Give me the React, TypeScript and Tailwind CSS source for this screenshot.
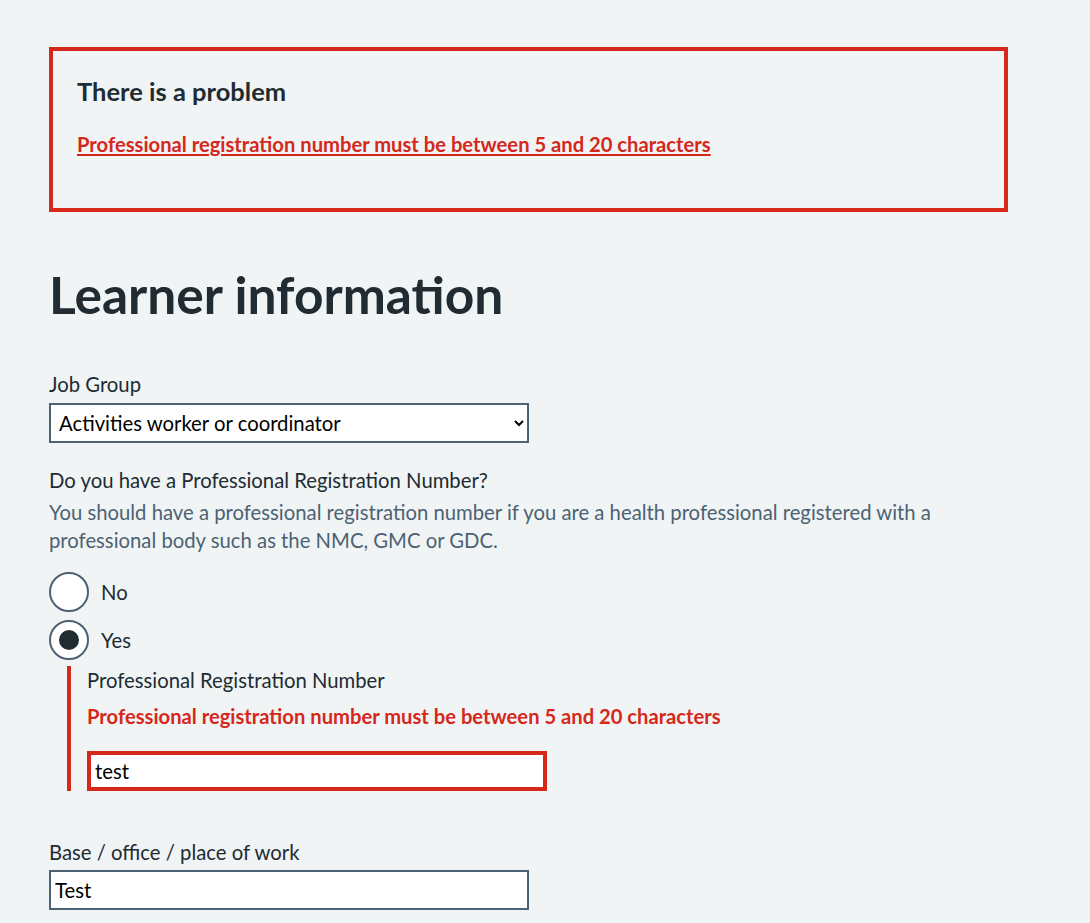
import { useState } from "react";

const font = { fontFamily: "Lato, 'Noto Sans', sans-serif" };

function Radio({ label, checked, onChange }: { label: string; checked: boolean; onChange: () => void }) {
  return (
    <label className="flex cursor-pointer items-center gap-3" onClick={onChange}>
      <span className="flex h-10 w-10 shrink-0 items-center justify-center rounded-full border-2 border-[#4c6272] bg-white">
        {checked && <span className="h-5 w-5 rounded-full bg-[#212b32]" />}
      </span>
      <span className="text-[20.3px] leading-7 text-[#212b32]">{label}</span>
    </label>
  );
}

export default function App() {
  const [hasNumber, setHasNumber] = useState(true);
  const [regNumber, setRegNumber] = useState("test");
  const [base, setBase] = useState("Test");

  return (
    <div className="min-h-[923px] bg-[#f0f4f5] pl-[49px] pr-[82px] pt-[47px] pb-10 text-[#212b32]" style={font}>
      {/* Error summary */}
      <div className="mb-[54px] border-4 border-[#d5281b] px-6 pt-6 pb-[50px]">
        <h2 className="mb-[23px] text-[25.5px] font-bold leading-8">There is a problem</h2>
        <ul>
          <li>
            <a href="#reg" className="text-[20.2px] font-bold leading-7 text-[#d5281b] underline">
              Professional registration number must be between 5 and 20 characters
            </a>
          </li>
        </ul>
      </div>

      <h1 className="mb-12 text-[51.5px] font-bold leading-[56px]">Learner information</h1>

      {/* Job group */}
      <div className="mb-[23px]">
        <label className="mb-[5px] block text-[20.3px] leading-7">Job Group</label>
        <select
          defaultValue="activities"
          className="block h-10 w-[480px] border-2 border-[#4c6272] bg-white pl-1 pr-2 text-[20.3px] text-black outline-none"
          style={font}
        >
          <option value="activities">Activities worker or coordinator</option>
          <option value="admin">Administrative or office staff</option>
        </select>
      </div>

      {/* Registration number */}
      <div>
        <div className="text-[20.3px] leading-7">Do you have a Professional Registration Number?</div>
        <div className="mb-[18px] mt-1 max-w-[920px] text-[20.3px] leading-7 text-[#4c6272]">
          You should have a professional registration number if you are a health professional registered with a
          professional body such as the NMC, GMC or GDC.
        </div>
        <div className="flex flex-col gap-2">
          <Radio label="No" checked={!hasNumber} onChange={() => setHasNumber(false)} />
          <Radio label="Yes" checked={hasNumber} onChange={() => setHasNumber(true)} />
        </div>
        {hasNumber && (
          <div className="ml-[18px] mt-[6px] border-l-4 border-[#d5281b] pl-4">
            <label htmlFor="reg" className="mb-2 block text-[20.3px] leading-7">
              Professional Registration Number
            </label>
            <div className="mb-[21px] text-[20.2px] font-bold leading-7 text-[#d5281b]">
              Professional registration number must be between 5 and 20 characters
            </div>
            <input
              id="reg"
              value={regNumber}
              onChange={(e) => setRegNumber(e.target.value)}
              className="block h-10 w-[460px] border-4 border-[#d5281b] bg-white px-1 text-[20.3px] text-black outline-none"
              style={font}
            />
          </div>
        )}
      </div>

      {/* Base */}
      <div className="mt-[47px]">
        <label className="mb-1 block text-[20.3px] leading-7">Base / office / place of work</label>
        <input
          value={base}
          onChange={(e) => setBase(e.target.value)}
          className="block h-10 w-[480px] border-2 border-[#4c6272] bg-white px-1 text-[20.3px] text-black outline-none"
          style={font}
        />
      </div>
    </div>
  );
}
